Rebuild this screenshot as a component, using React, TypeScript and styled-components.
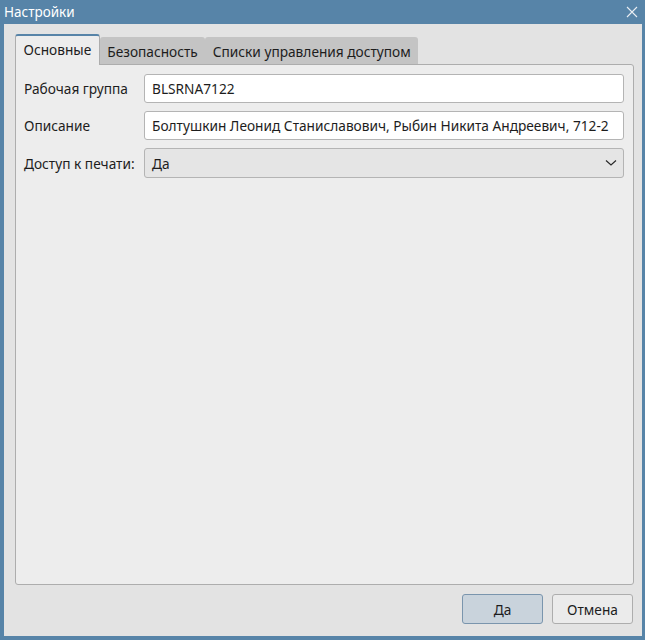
import React from "react";
import styled, { createGlobalStyle } from "styled-components";

const Global = createGlobalStyle`
  html, body { margin: 0; padding: 0; }
  body { font-family: "Noto Sans", "Open Sans", sans-serif; font-size: 13.7px; color: #1d1d1d; }
`;

const Window = styled.div`
  width: 645px;
  height: 640px;
  background: #5784a8;
  display: flex;
  flex-direction: column;
  box-sizing: border-box;
  padding: 0 3px 4px 4px;
`;

const TitleBar = styled.div`
  height: 23px;
  flex: none;
  display: flex;
  align-items: center;
  justify-content: space-between;
  color: #ffffff;
  font-size: 13.5px;
  padding: 0 4px 1px 0;
`;

const CloseBtn = styled.div`
  width: 12px;
  height: 12px;
  display: flex;
  align-items: center;
  justify-content: center;
`;

const Body = styled.div`
  flex: 1;
  background: #e3e3e3;
  display: flex;
  flex-direction: column;
  padding: 10px 8px 12px 11px;
  min-height: 0;
`;

const TabBar = styled.div`
  display: flex;
  align-items: flex-end;
  height: 30px;
  flex: none;
`;

const Tab = styled.div<{ $active?: boolean }>`
  box-sizing: border-box;
  padding: 0 7.5px;
  display: flex;
  align-items: center;
  white-space: nowrap;
  border-radius: 3px 3px 0 0;
  ${(p) =>
    p.$active
      ? `
    background: #ededed;
    border-top: 2px solid #5784a8;
    border-left: 1px solid #adadad;
    border-right: 1px solid #adadad;
    margin-bottom: -1px;
    height: 31px;
    position: relative;
    z-index: 1;
    padding-bottom: 2px;
  `
      : `
    height: 27px;
    background: #c4c4c4;
    padding-top: 1px;
  `}
`;

const Panel = styled.div`
  flex: 1;
  background: #ededed;
  border: 1px solid #adadad;
  border-radius: 0 3px 3px 3px;
  padding: 9px 9px 10px 8px;
  display: grid;
  grid-template-columns: 113px 1fr;
  grid-auto-rows: min-content;
  column-gap: 7px;
  row-gap: 8px;
  align-content: start;
`;

const Label = styled.div`
  display: flex;
  align-items: center;
  white-space: nowrap;
`;

const Input = styled.div`
  height: 29px;
  box-sizing: border-box;
  background: #ffffff;
  border: 1px solid #b4b4b4;
  border-radius: 3px;
  padding: 0 7px;
  display: flex;
  align-items: center;
  white-space: nowrap;
  overflow: hidden;
`;

const Combo = styled(Input)`
  height: 30px;
  background: #e5e5e5;
  justify-content: space-between;
  padding-right: 5px;
`;

const Footer = styled.div`
  display: flex;
  justify-content: flex-end;
  gap: 9px;
  padding-top: 9px;
  padding-right: 1px;
  flex: none;
`;

const Button = styled.div<{ $primary?: boolean }>`
  width: 81px;
  height: 30px;
  box-sizing: border-box;
  border-radius: 3px;
  display: flex;
  align-items: center;
  justify-content: center;
  background: ${(p) => (p.$primary ? "#c9d3dc" : "#ebebeb")};
  border: 1px solid ${(p) => (p.$primary ? "#7a95ad" : "#adadad")};
`;

export default function App() {
  return (
    <>
      <Global />
      <Window>
        <TitleBar>
          <span>Настройки</span>
          <CloseBtn>
            <svg width="12" height="12" viewBox="0 0 12 12">
              <path d="M1 1 L11 11 M11 1 L1 11" stroke="#e9eef3" strokeWidth="1.1" fill="none" />
            </svg>
          </CloseBtn>
        </TitleBar>
        <Body>
          <TabBar>
            <Tab $active>Основные</Tab>
            <Tab>Безопасность</Tab>
            <Tab>Списки управления доступом</Tab>
          </TabBar>
          <Panel>
            <Label>Рабочая группа</Label>
            <Input>BLSRNA7122</Input>
            <Label>Описание</Label>
            <Input>Болтушкин Леонид Станиславович, Рыбин Никита Андреевич, 712-2</Input>
            <Label>Доступ к печати:</Label>
            <Combo>
              <span>Да</span>
              <svg width="14" height="8" viewBox="0 0 14 8">
                <path d="M2 1.5 L7 6 L12 1.5" stroke="#2a2a2a" strokeWidth="1.2" fill="none" />
              </svg>
            </Combo>
          </Panel>
          <Footer>
            <Button $primary>Да</Button>
            <Button>Отмена</Button>
          </Footer>
        </Body>
      </Window>
    </>
  );
}
